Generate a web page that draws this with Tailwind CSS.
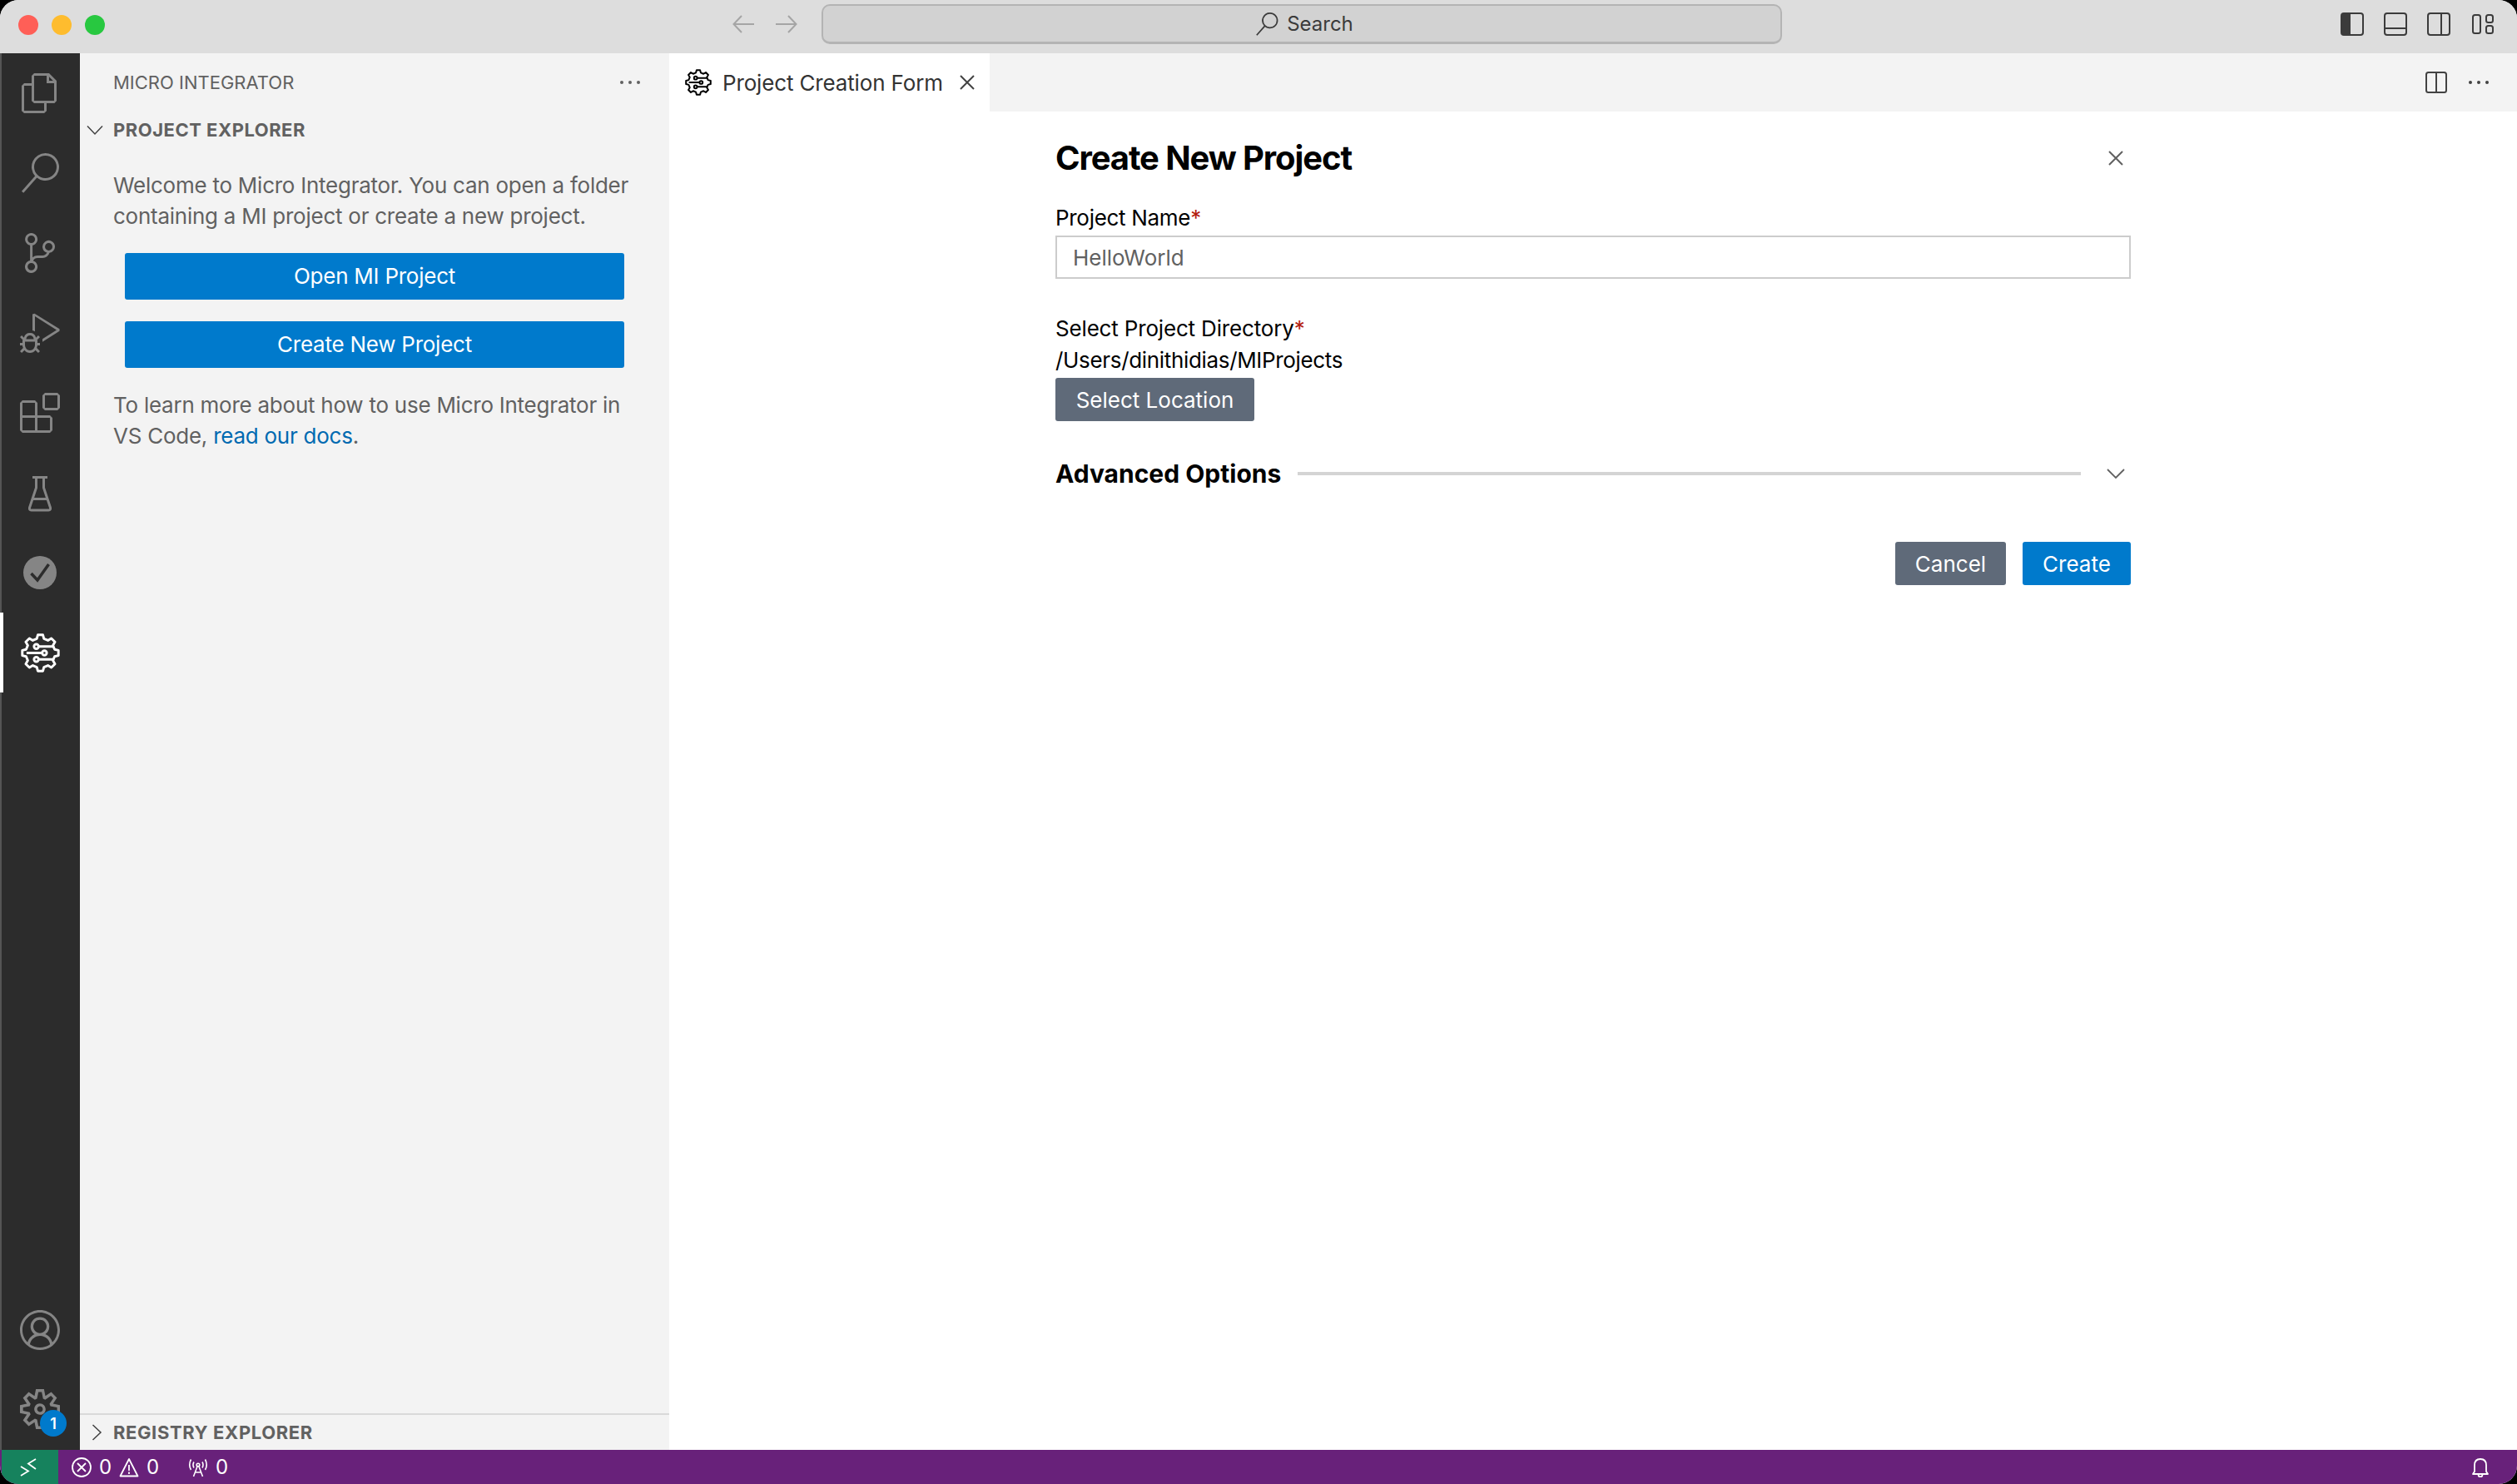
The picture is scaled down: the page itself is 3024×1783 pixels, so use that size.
<!DOCTYPE html>
<html>
<head>
<meta charset="utf-8" />
<title>Project Creation Form</title>
<script src="https://cdn.jsdelivr.net/npm/@tailwindcss/browser@4"></script>
</head>
<body class="bg-black font-['Inter','Noto_Sans',sans-serif]">
<svg class="hidden">
	<defs>
		<symbol id="mi-gear" viewBox="0 0 24 24">
			<g fill="none" stroke="currentColor" stroke-width="1.5" stroke-linejoin="round">
				<path d="M9.82 3.27L10.44.91H13.56L14.18 3.27L16.64 4.29L18.74 3.05L20.95 5.26L19.71 7.36L20.73 9.82L23.09 10.44V13.56L20.73 14.18L19.71 16.64L20.95 18.74L18.74 20.95L16.64 19.71L14.18 20.73L13.56 23.09H10.44L9.82 20.73L7.36 19.71L5.26 20.95L3.05 18.74L4.29 16.64L3.27 14.18L.91 13.56V10.44L3.27 9.82L4.29 7.36L3.05 5.26L5.26 3.05L7.36 4.29Z"/>
				<path d="M11 8H20M3.5 12H13M11 16H20"/>
				<circle cx="9.5" cy="8" r="1.4"/>
				<circle cx="14.5" cy="12" r="1.4"/>
				<circle cx="9.5" cy="16" r="1.4"/>
			</g>
		</symbol>
	</defs>
</svg>

<div class="w-[3024px] h-[1783px] flex flex-col rounded-[22px] overflow-hidden bg-white">

	<!-- title bar -->
	<div class="h-16 shrink-0 flex items-center bg-[#dddddd]">
		<div class="flex gap-4 pl-[22px] mb-1">
			<div class="w-6 h-6 rounded-full bg-[#ff5f57]"></div>
			<div class="w-6 h-6 rounded-full bg-[#febc2e]"></div>
			<div class="w-6 h-6 rounded-full bg-[#28c840]"></div>
		</div>
		<div class="flex items-center gap-[26px] ml-[754px] mb-1.5 text-[#a5a5a5]">
			<svg class="w-[26px] h-[22px]" viewBox="0 0 26 22" fill="none" stroke="currentColor" stroke-width="2"><path d="M11 1L1.5 11L11 21M2 11H26"/></svg>
			<svg class="w-[26px] h-[22px]" viewBox="0 0 26 22" fill="none" stroke="currentColor" stroke-width="2"><path d="M15 1L24.5 11L15 21M24 11H0"/></svg>
		</div>
		<div class="w-[1154px] h-12 ml-[29px] mb-1.5 pl-[6px] flex items-center justify-center gap-[10px] rounded-[10px] border-2 border-b-[3px] border-[#b4b4b4] bg-[#d2d2d2] text-[#3b3b3b] text-[24px]">
			<svg class="w-7 h-7" viewBox="0 0 24 24" fill="currentColor"><path d="M15.25 0a8.25 8.25 0 0 0-6.18 13.72L1 22.88l1.12 1 8.05-9.12A8.251 8.251 0 1 0 15.25.01V0zm0 15a6.75 6.75 0 1 1 0-13.5 6.75 6.75 0 0 1 0 13.5z"/></svg>
			<span>Search</span>
		</div>
		<div class="flex items-center gap-6 ml-auto mb-1.5 pr-[28px] text-[#3b3b3b]">
			<svg class="w-7 h-7" viewBox="0 0 28 28"><rect x="1" y="1" width="26" height="26" rx="3" fill="none" stroke="currentColor" stroke-width="2"/><path d="M3 1H12V27H3Q1 27 1 25V3Q1 1 3 1Z" fill="currentColor"/></svg>
			<svg class="w-7 h-7" viewBox="0 0 28 28" fill="none" stroke="currentColor" stroke-width="2"><rect x="1" y="1" width="26" height="26" rx="3"/><path d="M1 19H27"/></svg>
			<svg class="w-7 h-7" viewBox="0 0 28 28" fill="none" stroke="currentColor" stroke-width="2"><rect x="1" y="1" width="26" height="26" rx="3"/><path d="M17 1V27"/></svg>
			<svg class="w-[26px] h-6 ml-0.5" viewBox="0 0 26 24" fill="none" stroke="currentColor" stroke-width="2"><rect x="1" y="1" width="9" height="22" rx="2.5"/><rect x="17" y="1" width="8" height="9" rx="2.5"/><rect x="17" y="14" width="8" height="9" rx="2.5"/></svg>
		</div>
	</div>

	<div class="flex-1 flex min-h-0">

		<!-- activity bar -->
		<div class="w-24 shrink-0 flex flex-col bg-[#2c2c2c] border-l-2 border-[#555555] text-[#858585]">
			<div class="h-24 flex items-center justify-center pr-0.5">
				<svg class="w-12 h-12" viewBox="0 0 24 24" fill="currentColor"><path d="M17.5 0h-9L7 1.5V6H2.5L1 7.5v15.07L2.5 24h12.07L16 22.57V18h4.7l1.3-1.43V4.5L17.5 0zm0 2.12l2.38 2.38H17.5V2.12zm-3 20.38h-12v-15H7v9.07L8.5 18h6v4.5zm6-6h-12v-15H16V6h4.5v10.5z"/></svg>
			</div>
			<div class="h-24 flex items-center justify-center pr-0.5">
				<svg class="w-12 h-12" viewBox="0 0 24 24" fill="currentColor"><path d="M15.25 0a8.25 8.25 0 0 0-6.18 13.72L1 22.88l1.12 1 8.05-9.12A8.251 8.251 0 1 0 15.25.01V0zm0 15a6.75 6.75 0 1 1 0-13.5 6.75 6.75 0 0 1 0 13.5z"/></svg>
			</div>
			<div class="h-24 flex items-center justify-center pr-0.5">
				<svg class="w-12 h-12" viewBox="0 0 24 24" fill="currentColor"><path d="M21.007 8.222A3.738 3.738 0 0 0 15.045 5.2a3.737 3.737 0 0 0 1.156 6.583 2.988 2.988 0 0 1-2.668 1.67h-2.99a4.456 4.456 0 0 0-2.989 1.165V7.4a3.737 3.737 0 1 0-1.494 0v9.117a3.776 3.776 0 1 0 1.816.099 2.99 2.99 0 0 1 2.668-1.667h2.99a4.484 4.484 0 0 0 4.223-3.039 3.736 3.736 0 0 0 3.25-3.687zM4.565 3.738a2.242 2.242 0 1 1 4.484 0 2.242 2.242 0 0 1-4.484 0zm4.484 16.441a2.242 2.242 0 1 1-4.484 0 2.242 2.242 0 0 1 4.484 0zm8.221-9.715a2.242 2.242 0 1 1 0-4.485 2.242 2.242 0 0 1 0 4.485z"/></svg>
			</div>
			<div class="h-24 flex items-center justify-center pr-0.5">
				<svg class="w-12 h-12" viewBox="0 0 24 24" fill="currentColor"><path d="M10.94 13.5l-1.32 1.32a3.73 3.73 0 0 0-7.24 0L1.06 13.5 0 14.56l1.72 1.72-.22.22V18H0v1.5h1.5v.08c.077.489.214.966.41 1.42L0 22.94 1.06 24l1.65-1.65A4.308 4.308 0 0 0 6 24a4.31 4.31 0 0 0 3.29-1.65L10.94 24 12 22.94 10.09 21c.198-.464.336-.951.41-1.45v-.1H12V18h-1.5v-1.5l-.22-.22L12 14.56l-1.06-1.06zM6 13.5a2.25 2.25 0 0 1 2.25 2.25h-4.5A2.25 2.25 0 0 1 6 13.5zm3 6a3.33 3.33 0 0 1-3 3 3.33 3.33 0 0 1-3-3v-2.25h6v2.25zm14.76-9.9v1.26L13.5 17.37v-1.77l8.5-5.37L9 2v9.1a5.07 5.07 0 0 0-1.5-.59V.76l1.27-.41 15 9.25z"/></svg>
			</div>
			<div class="h-24 flex items-center justify-center pr-0.5">
				<svg class="w-12 h-12" viewBox="0 0 24 24" fill="currentColor"><path d="M13.5 1.5L15 0h7.5L24 1.5V9l-1.5 1.5H15L13.5 9V1.5zm1.5 0V9h7.5V1.5H15zM0 15V6l1.5-1.5H9L10.5 6v7.5H18l1.5 1.5v7.5L18 24H1.5L0 22.5V15zm9-1.5V6H1.5v7.5H9zM9 15H1.5v7.5H9V15zm1.5 7.5H18V15h-7.5v7.5z"/></svg>
			</div>
			<div class="h-24 flex items-center justify-center pr-0.5">
				<svg class="w-12 h-12" viewBox="0 0 48 48" fill="none" stroke="currentColor" stroke-width="3"><path d="M15 5.5H33M19.5 5.5V18L11.5 42Q11 45 13.5 45H34.500Q37 45 36.500 42L28.500 18V5.500M15 31.500H33" stroke-linejoin="round"/></svg>
			</div>
			<div class="h-24 flex items-center justify-center pr-0.5">
				<svg class="w-12 h-12" viewBox="0 0 48 48"><circle cx="24" cy="24" r="20" fill="currentColor"/><path d="M13.500 25L21 33L34.500 14" fill="none" stroke="#2c2c2c" stroke-width="3.500"/></svg>
			</div>
			<div class="relative h-24 flex items-center justify-center pr-0.5 text-white">
				<div class="absolute left-[-2px] top-0 w-1 h-24 bg-white"></div>
				<svg class="w-[47px] h-[47px]"><use href="#mi-gear"/></svg>
			</div>
			<div class="mt-auto h-[92px] flex items-center justify-center pr-0.5">
				<svg class="w-12 h-12" viewBox="0 0 16 16" fill="currentColor"><path d="M16 7.992C16 3.58 12.416 0 8 0S0 3.58 0 7.992c0 2.43 1.104 4.62 2.832 6.09.016.016.032.016.032.032.144.112.288.224.448.336.08.048.144.111.224.175A7.98 7.98 0 0 0 8.016 16a7.98 7.98 0 0 0 4.48-1.375c.08-.048.144-.111.224-.16.144-.111.304-.223.448-.335.016-.016.032-.016.032-.032 1.696-1.487 2.8-3.676 2.8-6.106zm-8 7.001c-1.504 0-2.88-.48-4.016-1.279.016-.128.048-.255.08-.383a4.17 4.17 0 0 1 .416-.991c.176-.304.384-.576.64-.816.24-.24.528-.463.816-.639.304-.176.624-.304.976-.4A4.15 4.15 0 0 1 8 10.342a4.185 4.185 0 0 1 2.928 1.166c.368.368.656.8.864 1.295.112.288.192.592.24.911A7.03 7.03 0 0 1 8 14.993zm-2.448-7.4a2.49 2.49 0 0 1-.208-1.024c0-.351.064-.703.208-1.023.144-.32.336-.607.576-.847.24-.24.528-.431.848-.575.32-.144.672-.208 1.024-.208.368 0 .704.064 1.024.208.32.144.608.336.848.575.24.24.432.528.576.847.144.32.208.672.208 1.023 0 .368-.064.704-.208 1.023a2.84 2.84 0 0 1-.576.848 2.84 2.84 0 0 1-.848.575 2.715 2.715 0 0 1-2.064 0 2.84 2.84 0 0 1-.848-.575 2.526 2.526 0 0 1-.56-.848zm7.424 5.306c0-.032-.016-.048-.016-.08a5.22 5.22 0 0 0-.688-1.406 4.883 4.883 0 0 0-1.088-1.135 5.207 5.207 0 0 0-1.04-.608 2.82 2.82 0 0 0 .464-.383 4.2 4.2 0 0 0 .624-.784 3.624 3.624 0 0 0 .528-1.934 3.71 3.71 0 0 0-.288-1.47 3.799 3.799 0 0 0-.816-1.199 3.845 3.845 0 0 0-1.2-.8 3.72 3.72 0 0 0-1.472-.287 3.72 3.72 0 0 0-1.472.288 3.631 3.631 0 0 0-1.2.815 3.84 3.84 0 0 0-.8 1.199 3.71 3.71 0 0 0-.288 1.47c0 .352.048.688.144 1.007.096.336.224.64.4.927.16.288.384.544.624.784.144.144.304.271.48.383a5.12 5.12 0 0 0-1.04.624c-.416.32-.784.703-1.088 1.119a4.999 4.999 0 0 0-.688 1.406c-.016.032-.016.064-.016.08C1.776 11.636.992 9.91.992 7.992.992 4.14 4.144.991 8 .991s7.008 3.149 7.008 7.001a6.96 6.96 0 0 1-2.032 4.907z"/></svg>
			</div>
			<div class="relative h-[98px] flex items-center justify-center pr-0.5">
				<svg class="w-12 h-12" viewBox="0 0 24 24" fill="currentColor"><path d="M19.85 8.75l4.15.83v4.84l-4.15.83 2.35 3.52-3.43 3.43-3.52-2.35-.83 4.15H9.58l-.83-4.15-3.52 2.35-3.43-3.43 2.35-3.52L0 14.42V9.58l4.15-.83L1.8 5.23 5.23 1.8l3.52 2.35L9.58 0h4.84l.83 4.15 3.52-2.35 3.43 3.43-2.35 3.52zm-1.57 5.07l4-.81v-2l-4-.81-.54-1.3 2.29-3.43-1.43-1.43-3.43 2.29-1.3-.54-.81-4h-2l-.81 4-1.3.54-3.43-2.29-1.43 1.43L6.38 8.9l-.54 1.3-4 .81v2l4 .81.54 1.3-2.29 3.43 1.43 1.43 3.43-2.29 1.3.54.81 4h2l.81-4 1.3-.54 3.43 2.29 1.43-1.43-2.29-3.43.54-1.3zm-8.186-4.672A3.43 3.43 0 0 1 12 8.57 3.44 3.44 0 0 1 15.43 12a3.43 3.43 0 1 1-5.336-2.852zm.956 4.274c.281.188.612.288.95.288A1.7 1.7 0 0 0 13.71 12a1.71 1.71 0 1 0-2.66 1.422z"/></svg>
				<div class="absolute left-[46px] top-[50px] w-8 h-8 rounded-full bg-[#007acc] text-white text-[18px] font-semibold flex items-center justify-center">1</div>
			</div>
		</div>

		<!-- sidebar -->
		<div class="w-[708px] shrink-0 flex flex-col bg-[#f3f3f3] text-[#616161]">
			<div class="h-[70px] flex items-center justify-between pl-10 pr-[34px] text-[22px]">
				<span>MICRO INTEGRATOR</span>
				<svg class="w-[26px] h-[6px]" viewBox="0 0 26 6" fill="#616161"><circle cx="3" cy="3" r="2"/><circle cx="13" cy="3" r="2"/><circle cx="23" cy="3" r="2"/></svg>
			</div>
			<div class="h-11 flex items-center pl-2 text-[22px] font-bold">
				<svg class="w-5 h-5 mr-3 text-[#424242]" viewBox="0 0 20 20" fill="none" stroke="currentColor" stroke-width="1.500"><path d="M1 5.500L10 15L19 5.500"/></svg>
				<span class="tracking-[0.5px]">PROJECT EXPLORER</span>
			</div>
			<div class="px-10 pt-[27px] text-[26px] leading-[36.500px] tracking-[-0.25px]">
				<p>Welcome to Micro Integrator. You can open a folder containing a MI project or create a new project.</p>
				<div class="mt-[26px] mx-[14px] h-14 rounded-[3px] bg-[#007acc] text-white flex items-center justify-center">Open MI Project</div>
				<div class="mt-[26px] mx-[14px] h-14 rounded-[3px] bg-[#007acc] text-white flex items-center justify-center">Create New Project</div>
				<p class="mt-[27px]">To learn more about how to use Micro Integrator in VS Code, <span class="text-[#006ab1]">read our docs</span>.</p>
			</div>
			<div class="mt-auto h-11 flex items-center pl-[10px] border-t-2 border-[#d9d9d9] text-[22px] font-bold">
				<svg class="w-5 h-5 mr-[10px] text-[#424242]" viewBox="0 0 20 20" fill="none" stroke="currentColor" stroke-width="1.500"><path d="M5.500 1L15 10L5.500 19"/></svg>
				<span class="tracking-[0.6px]">REGISTRY EXPLORER</span>
			</div>
		</div>

		<!-- editor -->
		<div class="flex-1 flex flex-col min-w-0 bg-white">
			<div class="h-[70px] shrink-0 flex items-center bg-[#f3f3f3]">
				<div class="w-[385px] h-full flex items-center bg-white text-[#333333] text-[26px]">
					<svg class="w-[32px] h-[32px] ml-[19px] text-black"><use href="#mi-gear"/></svg>
					<span class="ml-[13px] tracking-[-0.15px]">Project Creation Form</span>
					<svg class="w-[18px] h-[18px] ml-auto mr-[18px]" viewBox="0 0 18 18" fill="none" stroke="#424242" stroke-width="2"><path d="M1 1L17 17M17 1L1 17"/></svg>
				</div>
				<div class="ml-auto flex items-center gap-[26px] pr-[34px] text-[#424242]">
					<svg class="w-[26px] h-[26px]" viewBox="0 0 26 26" fill="none" stroke="currentColor" stroke-width="2"><rect x="1" y="1" width="24" height="24" rx="2.500"/><path d="M13 1V25"/></svg>
					<svg class="w-6 h-[6px]" viewBox="0 0 24 6" fill="currentColor"><circle cx="2" cy="3" r="2"/><circle cx="12" cy="3" r="2"/><circle cx="22" cy="3" r="2"/></svg>
				</div>
			</div>

			<div class="w-[1292px] mx-auto text-[26px] text-black">
				<div class="h-20 mt-4 flex items-center justify-between">
					<h1 class="text-[40px] font-bold tracking-[-1.1px]">Create New Project</h1>
					<svg class="w-[18px] h-[18px] mr-[9px]" viewBox="0 0 18 18" fill="none" stroke="#616161" stroke-width="2"><path d="M1 1L17 17M17 1L1 17"/></svg>
				</div>
				<div class="h-[34px] mt-[14px] flex items-center tracking-[-0.3px]">Project Name<span class="text-[#b3200f]">*</span></div>
				<div class="h-[52px] mt-[5px] pl-[19px] flex items-center border-2 border-[#cccccc] text-[#616161]">HelloWorld</div>
				<div class="h-[34px] mt-[42px] flex items-center tracking-[-0.17px]">Select Project Directory<span class="text-[#b3200f]">*</span></div>
				<div class="h-[34px] mt-[4px] flex items-center tracking-[-0.33px]">/Users/dinithidias/MIProjects</div>
				<div class="w-[239px] h-[52px] mt-[5px] rounded-[3px] bg-[#5f6a79] text-white flex items-center justify-center">Select Location</div>
				<div class="h-10 mt-[43px] flex items-center">
					<span class="text-[30px] font-bold">Advanced Options</span>
					<div class="flex-1 h-1 ml-5 bg-[#d4d4d4]"></div>
					<svg class="w-[22px] h-[12px] ml-[31px] mr-[7px]" viewBox="0 0 22 12" fill="none" stroke="#616161" stroke-width="1.800"><path d="M1 1L11 11L21 1"/></svg>
				</div>
				<div class="flex justify-end gap-5 mt-[62px]">
					<div class="w-[133px] h-[52px] rounded-[3px] bg-[#5f6a79] text-white flex items-center justify-center">Cancel</div>
					<div class="w-[130px] h-[52px] rounded-[3px] bg-[#007acc] text-white flex items-center justify-center">Create</div>
				</div>
			</div>
		</div>
	</div>

	<!-- status bar -->
	<div class="h-[41px] shrink-0 flex items-center bg-[#68217a] text-white text-[24px]">
		<div class="w-[68px] h-full ml-0.5 flex items-center pl-[22px] bg-[#16825d]">
			<svg class="w-[20px] h-[24px]" viewBox="0 0 20 24" fill="none" stroke="white" stroke-width="1.800"><path d="M1 11L10 16.500L1 22M19 2L10 7.500L19 14"/></svg>
		</div>
		<svg class="w-6 h-6 ml-4" viewBox="0 0 24 24" fill="none" stroke="white" stroke-width="1.800"><circle cx="12" cy="12" r="11"/><path d="M7 7L17 17M17 7L7 17"/></svg>
		<span class="w-[14px] ml-[9px] text-center">0</span>
		<svg class="w-6 h-6 ml-[10px]" viewBox="0 0 24 24" fill="none" stroke="white" stroke-width="1.800"><path d="M12 2L1.500 22.500H22.500Z" stroke-linejoin="round"/><path d="M12 9V16M12 17.500V20"/></svg>
		<span class="w-[14px] ml-[9px] text-center">0</span>
		<svg class="w-6 h-6 ml-[36px]" viewBox="0 0 24 24" fill="none" stroke="white" stroke-width="1.600"><circle cx="12" cy="9" r="1.800"/><path d="M11 11L6.500 23M13 11L17.500 23M8.500 18H15.500M7 5.500Q5 9 7 12.500M17 5.500Q19 9 17 12.500M3.500 2.500Q0 9 3.500 15M20.500 2.500Q24 9 20.500 15"/></svg>
		<span class="w-[14px] ml-[9px] text-center">0</span>
		<svg class="w-6 h-6 ml-auto mr-[32px]" viewBox="0 0 24 24" fill="none" stroke="white" stroke-width="1.800"><path d="M3 20L5 17V9.500Q5 2 12 2Q19 2 19 9.500V17L21 20ZM9.500 20.500Q9.500 23.500 12 23.500Q14.500 23.500 14.500 20.500" stroke-linejoin="round"/></svg>
	</div>
</div>
</body>
</html>
